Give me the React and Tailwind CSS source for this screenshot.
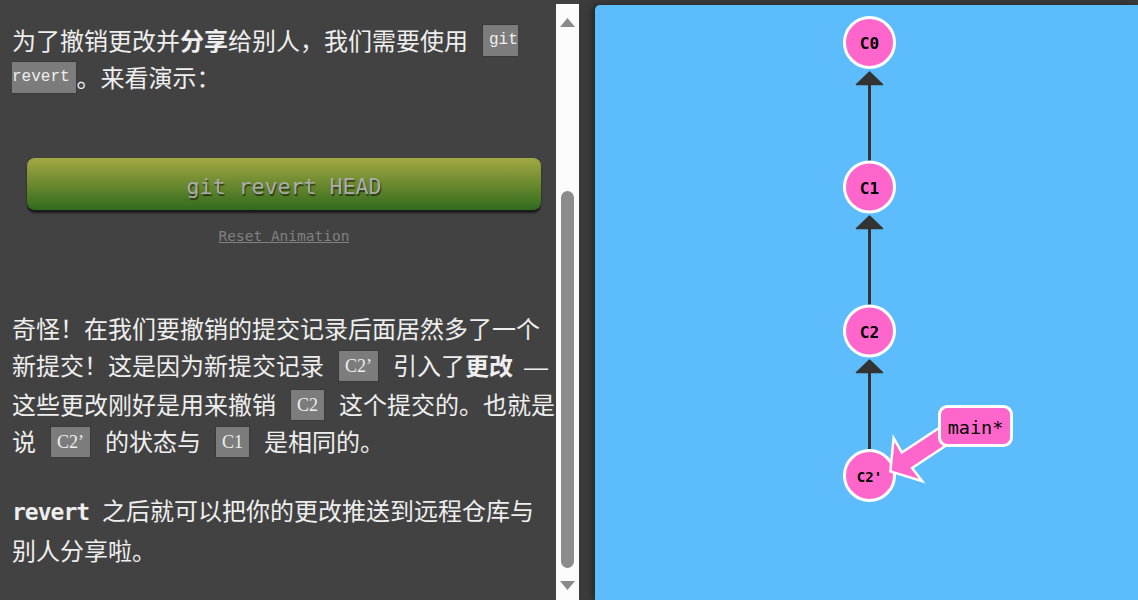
import React from "react";

const PINK = "#ff66cc";

function MonoChipStart({ children }) {
  return (
    <span className="inline-block h-[33px] border-y border-l border-[#3a3a3a] bg-[#7c7c7c] pl-[6px] align-[6px] font-[Liberation_Mono,monospace] text-[16px] leading-[31px] text-[#eeeeee]">
      {children}
    </span>
  );
}
function MonoChipEnd({ children }) {
  return (
    <span className="inline-block h-[33px] border-y border-r border-[#3a3a3a] bg-[#7c7c7c] pr-[6px] align-[6px] font-[Liberation_Mono,monospace] text-[16px] leading-[31px] text-[#eeeeee]">
      {children}
    </span>
  );
}
function Chip({ children }) {
  return (
    <span className="mx-[14px] inline-block h-[32px] border border-[#3a3a3a] bg-[#7c7c7c] px-[6px] align-[3px] font-[Liberation_Serif,serif] text-[18px] leading-[30px] text-[#eeeeee]">
      {children}
    </span>
  );
}

function Graph() {
  const x = 869.5;
  const nodes = [
    { y: 42.5, label: "C0", size: 16 },
    { y: 187, label: "C1", size: 16 },
    { y: 331, label: "C2", size: 16 },
    { y: 475.5, label: "C2'", size: 14 },
  ];
  const edges = [
    { apex: 71, lineEnd: 161 },
    { apex: 215, lineEnd: 305 },
    { apex: 359, lineEnd: 449 },
  ];
  return (
    <svg className="block" width="543" height="595" viewBox="595 5 543 595">
      {edges.map((e, i) => (
        <g key={i}>
          <line x1={x} y1={e.apex + 12} x2={x} y2={e.lineEnd} stroke="#333333" strokeWidth="3" />
          <polygon
            points={`${x},${e.apex + 1} ${x + 13},${e.apex + 13.5} ${x - 13},${e.apex + 13.5}`}
            fill="#333333"
            stroke="#333333"
            strokeWidth="1.5"
            strokeLinejoin="round"
          />
        </g>
      ))}
      {nodes.map((n) => (
        <g key={n.label}>
          <circle cx={x} cy={n.y} r="25" fill={PINK} stroke="#ffffff" strokeWidth="3" />
          <text
            x={x}
            y={n.y + 1}
            textAnchor="middle"
            dominantBaseline="central"
            fontFamily="DejaVu Sans Mono, monospace"
            fontWeight="bold"
            fontSize={n.size}
            fill="#000000"
          >
            {n.label}
          </text>
        </g>
      ))}
      <polygon
        points="891.7,470.4 894.5,442.1 901.4,454.3 948.1,423.4 957,436.8 910.3,467.7 918.8,478.8"
        fill={PINK}
        stroke="#ffffff"
        strokeWidth="5"
        strokeLinejoin="miter"
        paintOrder="stroke"
      />
      <rect x="939.5" y="406.5" width="72" height="39" rx="8" fill={PINK} stroke="#ffffff" strokeWidth="3" />
      <text
        x="975.5"
        y="427"
        textAnchor="middle"
        dominantBaseline="central"
        fontFamily="DejaVu Sans Mono, monospace"
        fontSize="18.5"
        fill="#000000"
      >
        main*
      </text>
    </svg>
  );
}

function Scrollbar() {
  return (
    <div className="flex w-[23px] shrink-0 flex-col items-center bg-[#fcfcfc]">
      <svg className="mt-[14px] block" width="15" height="9" viewBox="0 0 15 9">
        <polygon points="7.5,0 15,9 0,9" fill="#8a8a8a" />
      </svg>
      <div className="mt-[164px] h-[377px] w-[13px] rounded-full bg-[#8c8c8c]" />
      <svg className="mt-[13px] block" width="15" height="9" viewBox="0 0 15 9">
        <polygon points="0,0 15,0 7.5,9" fill="#8a8a8a" />
      </svg>
    </div>
  );
}

export default function App() {
  return (
    <div className="flex h-[600px] w-[1138px] overflow-hidden bg-[#3b3b3b]">
      <div className="flex w-[579px] shrink-0 bg-[#424242] pt-[4px]">
        <div className="w-[556px] shrink-0 overflow-hidden pl-[12px] font-[Noto_Sans_CJK_SC,sans-serif] text-[24px] text-[#eeeeee]">
          <p className="mt-[17px] whitespace-nowrap leading-[37px]">
            为了撤销更改并<b className="font-bold">分享</b>给别人，我们需要使用
            <span className="ml-[14px]">
              <MonoChipStart>git</MonoChipStart>
            </span>
            <br />
            <MonoChipEnd>revert</MonoChipEnd>。来看演示：
          </p>

          <div className="mx-[15px] mt-[63px] flex h-[52px] items-center justify-center rounded-[8px] bg-linear-to-b from-[#a3a843] to-[#2e6b1c] pt-[6px] shadow-[0_3px_2px_rgba(0,0,0,0.6)]">
            <span className="font-[DejaVu_Sans_Mono,monospace] text-[21.6px] leading-[26px] text-[#ababab] [text-shadow:1px_2px_1px_rgba(0,0,0,0.55)]">
              git revert HEAD
            </span>
          </div>

          <div className="mt-[16px] text-center font-[DejaVu_Sans_Mono,monospace] text-[14.5px] leading-[20px] text-[#808080]">
            <span className="underline">Reset Animation</span>
          </div>

          <p className="mt-[63px] whitespace-nowrap leading-[37px]">
            奇怪！在我们要撤销的提交记录后面居然多了一个
            <br />
            新提交！这是因为新提交记录<Chip>C2’</Chip>引入了<b className="font-bold">更改</b>
            <span className="ml-[11px] font-[Liberation_Sans,sans-serif]">—</span>
            <br />
            这些更改刚好是用来撤销<Chip>C2</Chip>这个提交的。也就是
            <br />
            说<Chip>C2’</Chip>的状态与<Chip>C1</Chip>是相同的。
          </p>

          <p className="mt-[32px] whitespace-nowrap leading-[37px]">
            <b className="font-[DejaVu_Sans_Mono,monospace] text-[23px] font-bold tracking-[-1px]">revert </b>
            之后就可以把你的更改推送到远程仓库与
            <br />
            别人分享啦。
          </p>
        </div>
        <Scrollbar />
      </div>
      <div className="flex-1 pl-[16px] pt-[5px]">
        <div className="h-full overflow-hidden rounded-tl-[5px] bg-[#5cbcfc] shadow-[-3px_0_6px_rgba(0,0,0,0.35)]">
          <Graph />
        </div>
      </div>
    </div>
  );
}
